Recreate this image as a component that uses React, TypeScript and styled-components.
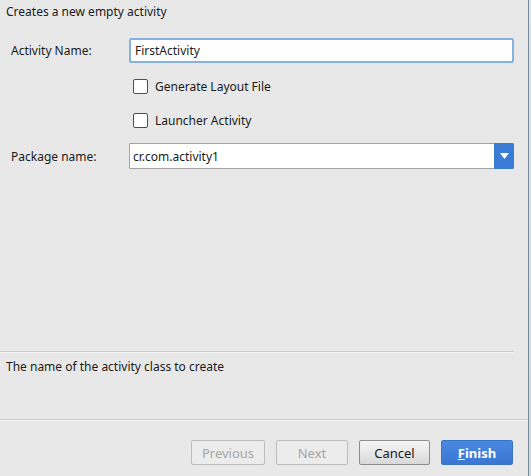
import React from 'react'
import styled, { createGlobalStyle } from 'styled-components'

const GlobalStyle = createGlobalStyle`
  html, body {
    margin: 0;
    padding: 0;
    background: #e8e8e8;
  }
  body {
    font-family: "Noto Sans", "Open Sans", sans-serif;
    font-size: 12px;
    color: #1a1a1a;
  }
`

const Page = styled.div`
  display: flex;
  width: 531px;
  height: 476px;
  overflow: hidden;
`
const Main = styled.div`
  display: flex;
  flex-direction: column;
  width: 528px;
  border-right: 1px solid #7c8794;
  background: #e8e8e8;
`
const Strip = styled.div`
  flex: 1;
  background: linear-gradient(#d7e4f2, #c9d9ec);
`
const Header = styled.div`
  padding: 4px 6px 0 6px;
  height: 34px;
  line-height: 16px;
`
const Form = styled.div`
  display: grid;
  grid-template-columns: 129px 1fr;
  padding-right: 14px;
`
const Label = styled.div<{ mt?: string }>`
  padding-left: 11px;
  margin-top: ${props => props.mt || '0'};
  display: flex;
  align-items: center;
`
const Cell = styled.div<{ h: string; mt?: string; pt?: string }>`
  height: ${props => props.h};
  margin-top: ${props => props.mt || '0'};
  padding-top: ${props => props.pt || '0'};
  display: flex;
  align-items: center;
`
const TextInput = styled.div`
  flex: 1;
  height: 21px;
  display: flex;
  align-items: center;
  padding-left: 4px;
  background: #ffffff;
  border: 2px solid #86b0e0;
  border-radius: 2px;
`
const CheckRow = styled.label`
  display: flex;
  align-items: center;
  gap: 7px;
  padding-left: 4px;
`
const Box = styled.span`
  width: 13px;
  height: 13px;
  border: 1px solid #4e4e4e;
  border-radius: 2px;
  background: #ffffff;
`
const Combo = styled.div`
  flex: 1;
  height: 24px;
  display: flex;
  background: #ffffff;
  border: 1px solid #a2a2a2;
  border-radius: 1px;
`
const ComboText = styled.div`
  flex: 1;
  display: flex;
  align-items: center;
  padding-left: 3px;
`
const ComboArrow = styled.div`
  width: 20px;
  margin: -1px -1px -1px 0;
  background: #3b7bd6;
  border-radius: 0 2px 2px 0;
  display: flex;
  align-items: center;
  justify-content: center;
`
const Spacer = styled.div`
  flex: 1;
`
const Separator = styled.div<{ mr?: string }>`
  height: 1px;
  background: #cbcbcb;
  border-bottom: 1px solid #f6f6f6;
  margin-right: ${props => props.mr || '0'};
`
const Help = styled.div`
  height: 66px;
  padding: 6px 6px 0 6px;
  box-sizing: border-box;
  line-height: 16px;
`
const Footer = styled.div`
  display: flex;
  justify-content: flex-end;
  gap: 11px;
  padding: 19px 15px 11px 0;
`
const Btn = styled.div<{ kind?: 'disabled' | 'primary'; w?: string }>`
  width: ${props => props.w || '71px'};
  height: 25px;
  box-sizing: border-box;
  display: flex;
  align-items: center;
  justify-content: center;
  border-radius: 2px;
  font-size: 13px;
  border: 1px solid ${props => props.kind === 'disabled' ? '#bcbcbc' : props.kind === 'primary' ? '#3a74c6' : '#8e8e8e'};
  color: ${props => props.kind === 'disabled' ? '#a6a6a6' : props.kind === 'primary' ? '#ffffff' : '#1a1a1a'};
  font-weight: ${props => (props.kind === 'primary' ? 700 : 400)};
  background: ${props => props.kind === 'disabled'
    ? '#ececec'
    : props.kind === 'primary'
      ? 'linear-gradient(#4a88e0, #3a77d4)'
      : 'linear-gradient(#f6f6f6, #d9d9d9)'};
`

const App = () => {
  return (
    <Page>
      <GlobalStyle />
      <Main>
        <Header>Creates a new empty activity</Header>
        <Form>
          <Label>Activity Name:</Label>
          <Cell h="25px">
            <TextInput>FirstActivity</TextInput>
          </Cell>
          <div />
          <Cell h="37px" pt="5px">
            <CheckRow><Box />Generate Layout File</CheckRow>
          </Cell>
          <div />
          <Cell h="30px">
            <CheckRow><Box />Launcher Activity</CheckRow>
          </Cell>
          <Label mt="8px">Package name:</Label>
          <Cell h="26px" mt="8px">
            <Combo>
              <ComboText>cr.com.activity1</ComboText>
              <ComboArrow>
                <svg width="9" height="6" viewBox="0 0 9 6">
                  <path d="M0 0 H9 L4.5 6 Z" fill="#ffffff" />
                </svg>
              </ComboArrow>
            </Combo>
          </Cell>
        </Form>
        <Spacer />
        <Separator mr="14px" />
        <Help>The name of the activity class to create</Help>
        <Separator />
        <Footer>
          <Btn kind="disabled" w="74px">Previous</Btn>
          <Btn kind="disabled" w="72px">Next</Btn>
          <Btn>Cancel</Btn>
          <Btn kind="primary" w="72px"><span><u>F</u>inish</span></Btn>
        </Footer>
      </Main>
      <Strip />
    </Page>
  )
}

export default App
